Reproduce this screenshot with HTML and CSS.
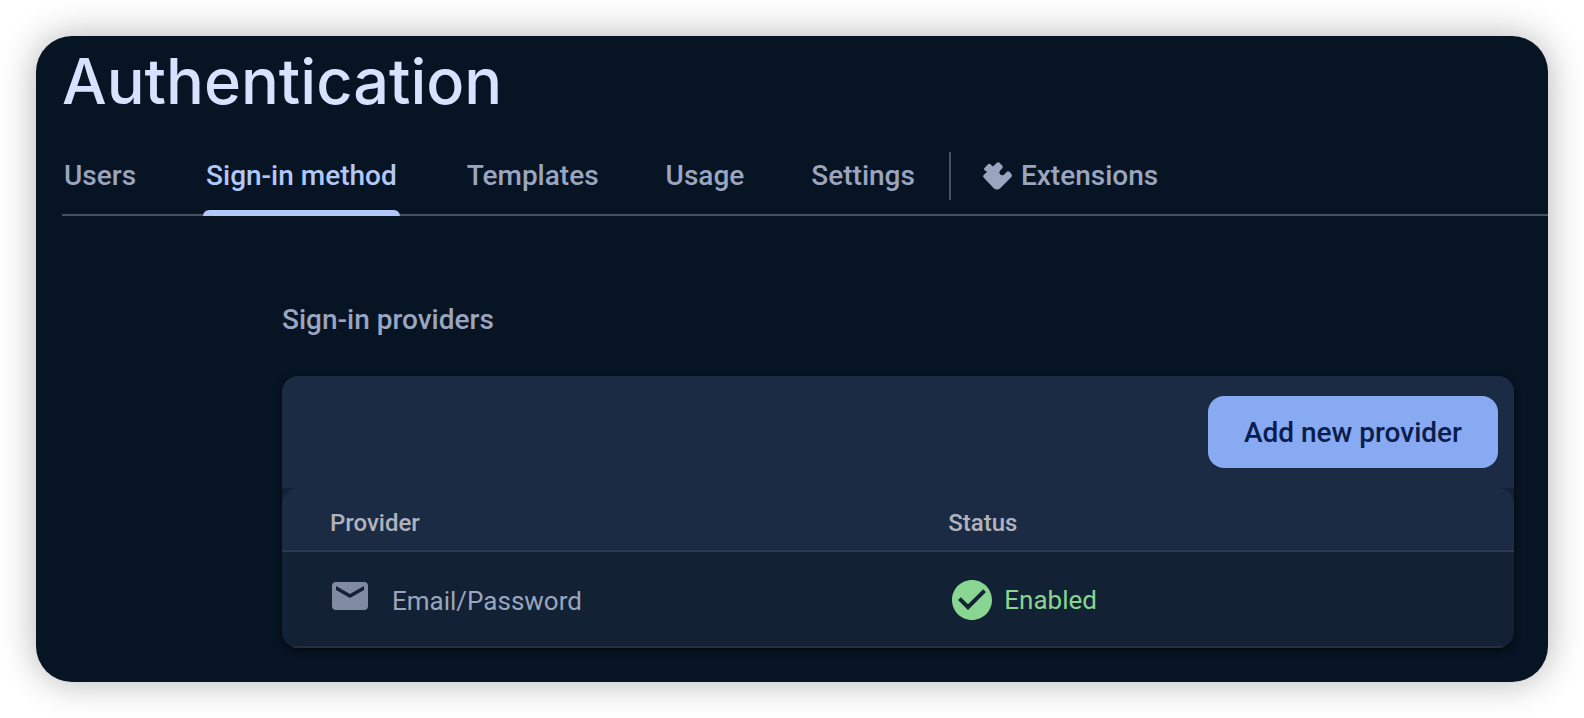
FILE: index.html
```html
<!DOCTYPE html>
<html lang="en">
<head>
<meta charset="utf-8">
<title>Authentication</title>
<link rel="stylesheet" href="styles.css">
</head>
<body>
<main class="window">
  <h1 class="title">Authentication</h1>
  <nav class="tabs" aria-label="Authentication sections">
    <a class="tab" href="#users">Users</a>
    <a class="tab tab-active" href="#sign-in-method" aria-current="page">Sign-in method</a>
    <a class="tab" href="#templates">Templates</a>
    <a class="tab" href="#usage">Usage</a>
    <a class="tab" href="#settings">Settings</a>
    <span class="divider"></span>
    <a class="tab tab-icon" href="#extensions">
      <svg class="icon-extension" viewBox="0 0 30 30" aria-hidden="true"><path d="M1.500 7L5 3.200Q6.200 2.200 7.400 3.200L9.800 5.400L14 1.700Q15.500 .7 16.800 1.900L19.300 4.700Q20.300 6 19.300 7.300L17 9.800Q15.800 11.600 17 13.200Q18.800 15.200 21 13.700L24.200 10.600Q25.400 9.800 26.500 10.800L28.500 13.200Q29.400 14.600 28.400 15.900L17.500 27Q14 30 10.500 27L.6 16.600Q-.3 15.200 .6 13.900L4.200 10.700L1.500 9.200Q.6 8.200 1.500 7Z"/></svg>
      Extensions
    </a>
  </nav>
  <section class="providers">
    <h2 class="section-title">Sign-in providers</h2>
    <div class="card">
      <div class="toolbar">
        <button class="add-button" type="button">Add new provider</button>
      </div>
      <table class="table">
        <thead>
          <tr><th class="col-provider" scope="col">Provider</th><th class="col-status" scope="col">Status</th></tr>
        </thead>
        <tbody>
          <tr>
            <td class="cell-provider">
              <div class="provider">
                <svg class="icon-mail" viewBox="0 0 36 28" aria-hidden="true"><path fill-rule="evenodd" d="M4 0H32Q36 0 36 4V24Q36 28 32 28H4Q0 28 0 24V4Q0 0 4 0ZM4 4V8L18 16L32 8V4L18 12Z"/></svg>
                <span>Email/Password</span>
              </div>
            </td>
            <td>
              <div class="status">
                <svg class="icon-check" viewBox="0 0 24 24" aria-hidden="true"><path d="M12 2C6.480 2 2 6.480 2 12s4.480 10 10 10 10-4.480 10-10S17.520 2 12 2zm-2 15l-5-5 1.410-1.410L10 14.170l7.590-7.590L19 8l-9 9z"/></svg>
                <span>Enabled</span>
              </div>
            </td>
          </tr>
        </tbody>
      </table>
    </div>
  </section>
</main>
</body>
</html>
```
FILE: styles.css
```css
* { box-sizing: border-box; }

body {
  margin: 0;
  padding: 36px;
  background: #fff;
  font-family: Roboto, "Liberation Sans", sans-serif;
  color: #9aa5bf;
}

.window {
  padding: 8px 0 34px 26px;
  border-radius: 36px;
  background: #071423;
  box-shadow: 0 0 36px rgba(0, 0, 0, 0.3);
}

.title {
  margin: 0 0 34px;
  font-family: Inter, Roboto, sans-serif;
  font-size: 63px;
  font-weight: 500;
  line-height: 74px;
  color: #d7e2ff;
}

.tabs {
  display: flex;
  gap: 67px;
  height: 64px;
  padding-left: 2px;
  border-bottom: 2px solid #45525f;
}

.tab {
  margin-bottom: -2px;
  font-size: 28px;
  font-weight: 500;
  line-height: 48px;
  color: #9aa5bf;
  text-decoration: none;
  white-space: nowrap;
}

.tab-active {
  position: relative;
  padding: 0 3px;
  color: #b1c8f8;
}

.tab-active::after {
  content: "";
  position: absolute;
  left: 0;
  right: 0;
  bottom: 0;
  height: 6px;
  border-radius: 6px 6px 0 0;
  background: #b1c8f8;
}

.divider {
  width: 2px;
  height: 48px;
  margin: 0 -35px 0 -33px;
  background: #45525f;
}

.tab-icon {
  display: flex;
  gap: 8px;
}

.icon-extension {
  width: 30px;
  height: 48px;
  fill: #9aa5bf;
}

.providers {
  padding: 88px 34px 0 220px;
}

.section-title {
  margin: 0 0 40px;
  font-size: 28px;
  font-weight: 500;
  line-height: 32px;
}

.card {
  overflow: hidden;
  border-radius: 16px;
  background: #122133;
  box-shadow: 0 2px 6px rgba(0, 0, 0, 0.6);
}

.toolbar {
  display: flex;
  justify-content: flex-end;
  padding: 20px 16px;
  background: #1c2b44;
}

.add-button {
  height: 72px;
  padding: 2px 36px 0;
  border: 0;
  border-radius: 16px;
  background: #87aaf2;
  color: #0a1d4d;
  font: 500 28px/36px Roboto, sans-serif;
}

.table {
  width: 100%;
  table-layout: fixed;
  border-collapse: separate;
  border-spacing: 0;
  text-align: left;
}

.table th {
  height: 64px;
  padding: 8px 0 0;
  border-bottom: 2px solid #2a3851;
  background: #1c2b44;
  color: #b0b3bd;
  font-size: 24px;
  font-weight: 500;
}

.table td {
  height: 96px;
  padding: 2px 0 0;
  border-bottom: 2px solid #222f41;
  font-size: 26px;
}

.table .col-provider {
  width: 54%;
  padding-left: 48px;
  border-top-left-radius: 16px;
}

.table .col-status {
  padding-left: 1px;
  border-top-right-radius: 16px;
}

.table .cell-provider {
  padding: 0 0 0 50px;
}

.provider {
  display: flex;
  align-items: flex-end;
  gap: 24px;
  line-height: 32px;
}

.icon-mail {
  width: 36px;
  height: 28px;
  margin-bottom: 7px;
  fill: #808ba1;
}

.status {
  display: flex;
  align-items: center;
  gap: 8px;
  padding-left: 1px;
  color: #88d692;
}

.icon-check {
  width: 48px;
  height: 48px;
  fill: #88d692;
}
```
